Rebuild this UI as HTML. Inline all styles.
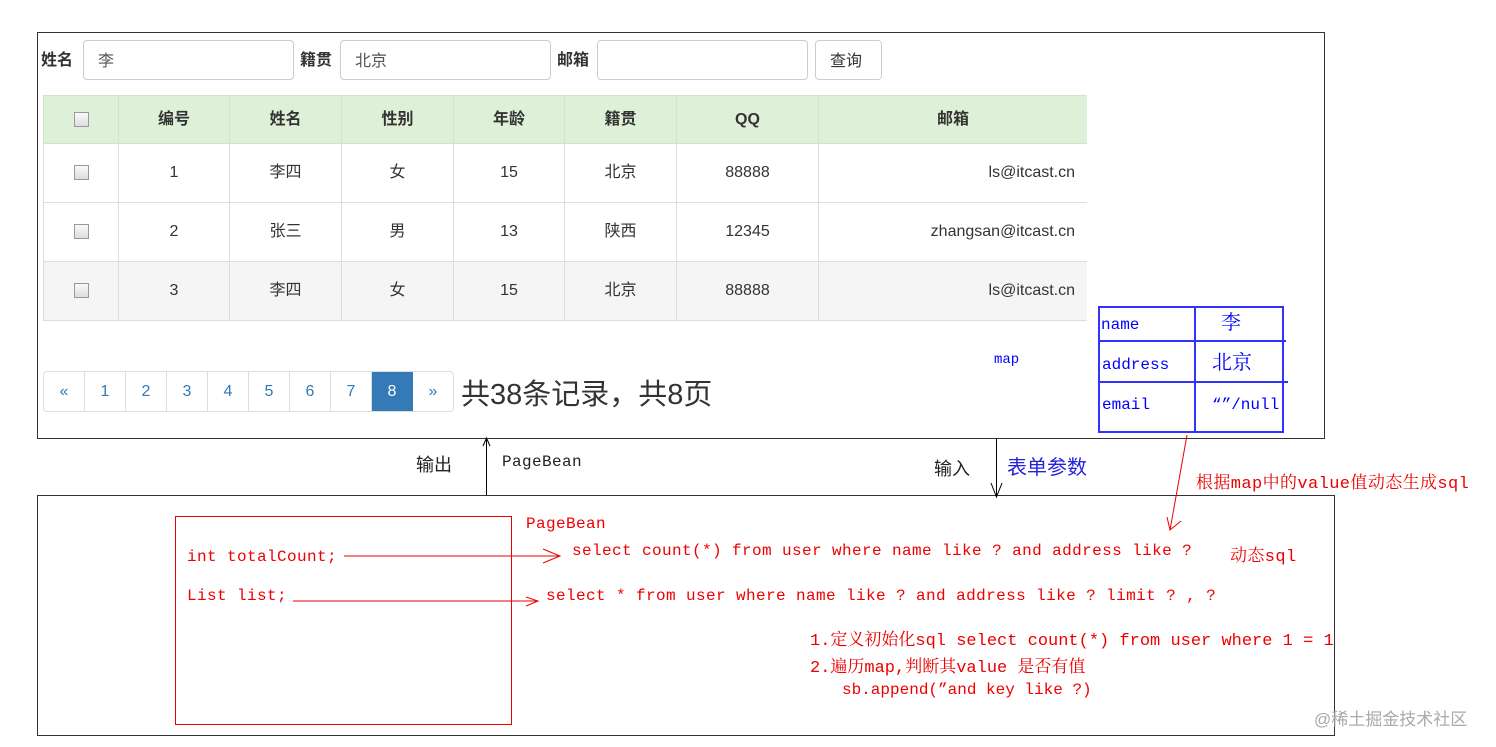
<!DOCTYPE html>
<html><head><meta charset="utf-8"><style>
body{margin:0;width:1496px;height:747px;background:#fff;position:relative;overflow:hidden;font-family:"Liberation Sans","Noto Sans CJK SC",sans-serif;color:#333}
.a{position:absolute;white-space:nowrap}
.m{font-family:"Liberation Mono","Noto Serif CJK SC",monospace;font-size:16px;letter-spacing:.4px;color:#e00;line-height:18px}
.b{border:1px solid #333}
.in{position:absolute;border:1px solid #ccc;border-radius:4px;height:40px;box-sizing:border-box;font-size:16px;color:#555;padding:2px 14px 0;line-height:38px}
.lb{position:absolute;font-weight:bold;font-size:16px;color:#333;line-height:20px}
table{position:absolute;left:43px;top:95px;border-collapse:collapse;font-size:16px}
td{border:1px solid #ddd;text-align:center;padding:0;line-height:20px;vertical-align:middle}
tr.h td{background:#dff0d8;font-weight:bold;height:47px;border-color:#d0e4c8}
tr.r td{height:58px}
.cb{display:inline-block;width:13px;height:13px;border:1px solid #999;background:linear-gradient(#fafafa,#ddd);vertical-align:middle}
.pg{position:absolute;top:371px;left:43px;display:flex;border:1px solid #ddd;border-radius:4px;height:41px;box-sizing:border-box}
.pg span{width:40px;text-align:center;line-height:39px;color:#337ab7;border-right:1px solid #ddd;font-size:16px}
.pg span.ac{background:#337ab7;color:#fff;border-color:#337ab7}
.bl{color:#00f;font-family:"Liberation Mono","Noto Serif CJK SC",monospace;font-size:16px;line-height:20px}
</style></head><body>
<div class="a b" style="left:37px;top:32px;width:1286px;height:405px"></div>
<div class="a b" style="left:37px;top:495px;width:1296px;height:239px"></div>

<div class="lb" style="left:41px;top:51px">姓名</div>
<div class="in" style="left:83px;top:40px;width:211px">李</div>
<div class="lb" style="left:300px;top:51px">籍贯</div>
<div class="in" style="left:340px;top:40px;width:211px">北京</div>
<div class="lb" style="left:557px;top:51px">邮箱</div>
<div class="in" style="left:597px;top:40px;width:211px"></div>
<div class="in" style="left:815px;top:40px;width:67px;color:#333;background:#fff">查询</div>

<table>
<tr class="h"><td style="width:74px"><span class="cb"></span></td><td style="width:110px">编号</td><td style="width:111px">姓名</td><td style="width:111px">性别</td><td style="width:110px">年龄</td><td style="width:111px">籍贯</td><td style="width:141px">QQ</td><td style="width:268px;border-right:none">邮箱</td></tr>
<tr class="r"><td><span class="cb"></span></td><td>1</td><td>李四</td><td>女</td><td>15</td><td>北京</td><td>88888</td><td style="text-align:right;padding-right:12px;border-right:none">ls@itcast.cn</td></tr>
<tr class="r"><td><span class="cb"></span></td><td>2</td><td>张三</td><td>男</td><td>13</td><td>陕西</td><td>12345</td><td style="text-align:right;padding-right:12px;border-right:none">zhangsan@itcast.cn</td></tr>
<tr class="r" style="background:#f5f5f5"><td><span class="cb"></span></td><td>3</td><td>李四</td><td>女</td><td>15</td><td>北京</td><td>88888</td><td style="text-align:right;padding-right:12px;border-right:none">ls@itcast.cn</td></tr>
</table>

<div class="pg"><span>«</span><span>1</span><span>2</span><span>3</span><span>4</span><span>5</span><span>6</span><span>7</span><span class="ac">8</span><span style="border:none">»</span></div>
<div class="a" style="left:461px;top:377px;font-size:29px;color:#333;line-height:36px">共38条记录，共8页</div>

<div class="a bl" style="left:994px;top:350px;font-size:14px">map</div>
<div class="a" style="left:1098px;top:306px;width:186px;height:127px;border:2px solid #33f;box-sizing:border-box"></div>
<div class="a" style="left:1194px;top:306px;width:2px;height:127px;background:#33f"></div>
<div class="a" style="left:1098px;top:340px;width:188px;height:2px;background:#33f"></div>
<div class="a" style="left:1098px;top:381px;width:190px;height:2px;background:#33f"></div>
<div class="a bl" style="left:1101px;top:315px">name</div>
<div class="a bl" style="left:1221px;top:313px;font-size:20px;line-height:24px">李</div>
<div class="a bl" style="left:1102px;top:355px">address</div>
<div class="a bl" style="left:1212px;top:353px;font-size:20px;line-height:24px">北京</div>
<div class="a bl" style="left:1102px;top:395px">email</div>
<div class="a bl" style="left:1212px;top:395px">“”/null</div>

<svg class="a" style="left:0;top:0" width="1496" height="747">
<line x1="486.5" y1="438" x2="486.5" y2="495" stroke="#000"/>
<polyline points="483,446 486.5,438 490,446" fill="none" stroke="#000"/>
<line x1="996.5" y1="438" x2="996.5" y2="497" stroke="#000"/>
<polyline points="991,483 996.5,497 1002,483" fill="none" stroke="#000"/>
<line x1="1187" y1="435" x2="1170" y2="530" stroke="#e00" stroke-width="1"/>
<polyline points="1167,517 1170,530 1181,521" fill="none" stroke="#e00"/>
<line x1="344" y1="556" x2="560" y2="556" stroke="#e00"/>
<polyline points="543,549 560,556 543,563" fill="none" stroke="#e00"/>
<line x1="293" y1="601" x2="538" y2="601" stroke="#e00"/>
<polyline points="526,597 538,601 526,606" fill="none" stroke="#e00"/>
<rect x="175.5" y="516.5" width="336" height="208" fill="none" stroke="#e00"/>
</svg>
<div class="a" style="left:416px;top:451px;font-size:18px;color:#222">输出</div>
<div class="a m" style="left:502px;top:453px;color:#222">PageBean</div>
<div class="a" style="left:934px;top:455px;font-size:18px;color:#222">输入</div>
<div class="a" style="left:1007px;top:451px;font-size:20px;color:#22d">表单参数</div>
<div class="a m" style="left:1196px;top:476px;font-size:17px">根据map中的value值动态生成sql</div>
<div class="a m" style="left:526px;top:515px">PageBean</div>
<div class="a m" style="left:187px;top:548px">int totalCount;</div>
<div class="a m" style="left:572px;top:542px">select count(*) from user where name like ? and address like ?</div>
<div class="a m" style="left:1230px;top:549px;font-size:17px">动态sql</div>
<div class="a m" style="left:187px;top:587px">List list;</div>
<div class="a m" style="left:546px;top:587px">select * from user where name like ? and address like ? limit ? , ?</div>
<div class="a m" style="left:810px;top:633px;font-size:17px;letter-spacing:0">1.定义初始化sql select count(*) from user where 1 = 1</div>
<div class="a m" style="left:810px;top:660px;font-size:17px;letter-spacing:0">2.遍历map,判断其value 是否有值</div>
<div class="a m" style="left:842px;top:681px;letter-spacing:0">sb.append(”and  key like ?)</div>
<div class="a" style="left:1314px;top:705px;font-size:17px;color:#aaa">@稀土掘金技术社区</div>
</body></html>
